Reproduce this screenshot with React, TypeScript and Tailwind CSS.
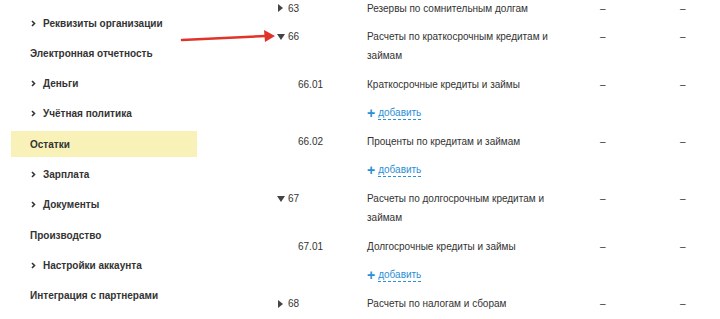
import React from "react";

type NavItem = { label: string; caret?: boolean; active?: boolean };

const NAV: NavItem[] = [
  { label: "Реквизиты организации", caret: true },
  { label: "Электронная отчетность" },
  { label: "Деньги", caret: true },
  { label: "Учётная политика", caret: true },
  { label: "Остатки", active: true },
  { label: "Зарплата", caret: true },
  { label: "Документы", caret: true },
  { label: "Производство" },
  { label: "Настройки аккаунта", caret: true },
  { label: "Интеграция с партнерами" },
];

type Row =
  | { kind: "account"; code: string; name: string; toggle?: "open" | "closed"; sub?: boolean }
  | { kind: "add" };

const ROWS: Row[] = [
  { kind: "account", code: "63", name: "Резервы по сомнительным долгам", toggle: "closed" },
  { kind: "account", code: "66", name: "Расчеты по краткосрочным кредитам и займам", toggle: "open" },
  { kind: "account", code: "66.01", name: "Краткосрочные кредиты и займы", sub: true },
  { kind: "add" },
  { kind: "account", code: "66.02", name: "Проценты по кредитам и займам", sub: true },
  { kind: "add" },
  { kind: "account", code: "67", name: "Расчеты по долгосрочным кредитам и займам", toggle: "open" },
  { kind: "account", code: "67.01", name: "Долгосрочные кредиты и займы", sub: true },
  { kind: "add" },
  { kind: "account", code: "68", name: "Расчеты по налогам и сборам", toggle: "closed" },
];

function Caret() {
  return (
    <svg width="5" height="7" viewBox="0 0 5 7" className="mr-[7px] shrink-0">
      <path d="M1 1l2.5 2.5L1 6" fill="none" stroke="#333" strokeWidth="1.6" />
    </svg>
  );
}

function Toggle({ open }: { open: boolean }) {
  return open ? (
    <svg width="8" height="6" viewBox="0 0 8 6" className="shrink-0">
      <path d="M0 0h8L4 6z" fill="#444" />
    </svg>
  ) : (
    <svg width="8" height="8" viewBox="0 0 8 8" className="shrink-0">
      <path d="M1 0l5 4-5 4z" fill="#444" />
    </svg>
  );
}

export default function App() {
  return (
    <div
      className="relative h-[319px] w-[720px] overflow-hidden bg-white text-[#333]"
      style={{ fontFamily: '"Liberation Sans", Arial, sans-serif' }}
    >
      <div className="flex">
        <nav className="ml-[11px] flex w-[186px] shrink-0 flex-col gap-[4.33px] pt-[10px]">
          {NAV.map((item) => (
            <div
              key={item.label}
              className={`flex h-[26px] items-center text-[10px] font-bold ${
                item.active ? "bg-[#f8f2b9] pl-[19px]" : item.caret ? "pl-[20px]" : "pl-[19px]"
              }`}
            >
              {item.caret && <Caret />}
              <span className="whitespace-nowrap">{item.label}</span>
            </div>
          ))}
        </nav>

        <div className="mt-[-6px] ml-[80px] flex-1 text-[10px]">
          {ROWS.map((row, i) =>
            row.kind === "add" ? (
              <div key={i} className="grid grid-cols-[90px_233px_80px_1fr] py-[4.8px] leading-[19px]">
                <div />
                <div className="flex items-center text-[#2b8fd6]">
                  <span className="mr-[3px] text-[14px] font-bold leading-[19px]">+</span>
                  <span className="border-b border-dashed border-[#2b8fd6] leading-[13px]">добавить</span>
                </div>
              </div>
            ) : (
              <div key={i} className="grid grid-cols-[90px_233px_80px_1fr] py-[4.8px] leading-[19px]">
                <div className={`flex items-start ${row.sub ? "pl-[21px]" : ""}`}>
                  {row.toggle && (
                    <span className="mr-[3px] flex h-[19px] items-center">
                      <Toggle open={row.toggle === "open"} />
                    </span>
                  )}
                  <span>{row.code}</span>
                </div>
                <div className="w-[190px]">{row.name}</div>
                <div>–</div>
                <div>–</div>
              </div>
            )
          )}
        </div>
      </div>

      <svg
        className="pointer-events-none absolute left-[178px] top-[28px]"
        width="100"
        height="18"
        viewBox="0 0 100 18"
      >
        <path d="M4 12 L88 8" stroke="#e0332a" strokeWidth="2.6" strokeLinecap="round" />
        <path d="M86 2 L97 8 L87 14 Z" fill="#e0332a" />
      </svg>
    </div>
  );
}
